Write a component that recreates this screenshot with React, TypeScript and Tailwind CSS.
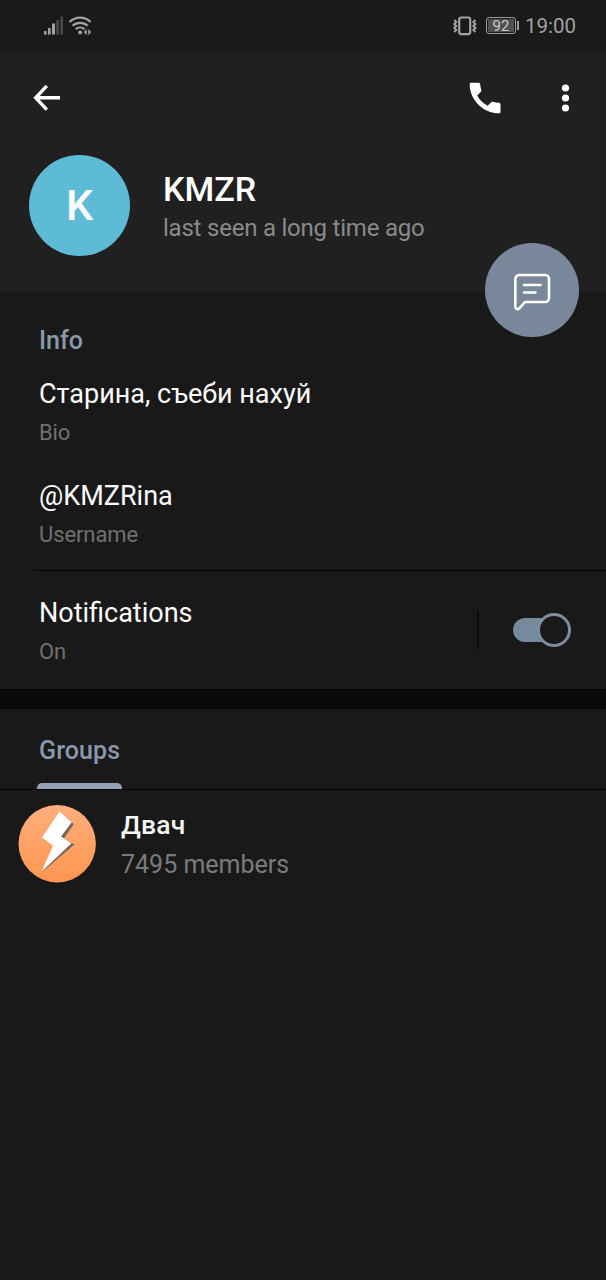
import type { ReactNode } from "react";

const StatusBar = () => (
  <div className="flex h-[51px] items-center justify-between bg-[#1a1a1a] pl-[43px] pr-[30px] text-[#a2a2a2]">
    <div className="flex items-center gap-[5px]">
      {/* Signal strength */}
      <svg width="21" height="20" viewBox="0 0 21 20" fill="currentColor">
        <rect x="1" y="15" width="2.6" height="3.6" />
        <rect x="5" y="12" width="2.6" height="6.6" />
        <rect x="9" y="7.5" width="3" height="11" />
        <rect x="13.3" y="4" width="2.6" height="14.6" fill="#4b4b4b" />
        <rect x="17.4" y=".5" width="2.6" height="18" fill="#4b4b4b" />
      </svg>
      {/* Wi-Fi with traffic arrows */}
      <svg width="24" height="20" viewBox="0 0 24 20" fill="none" stroke="currentColor" strokeWidth="2.2">
        <path d="M.6 6C6.600 .2 15.600 .2 21.600 6" />
        <path d="M3.600 9.800C7.600 5.900 14.600 5.900 18.600 9.800" />
        <path d="M6.600 13.200C9.200 10.900 13 10.900 15.600 13.200" />
        <circle cx="11.100" cy="16.600" r="2" fill="currentColor" stroke="none" />
        <path d="M17.700 13v6.200l-2.900-3.100zM19.300 13v6.200l2.900-3.100z" fill="currentColor" stroke="none" />
      </svg>
    </div>
    <div className="flex items-center">
      {/* Vibrate mode */}
      <svg width="25" height="20" viewBox="0 0 25 20" fill="none" stroke="currentColor">
        <rect x="7.2" y="1.5" width="11" height="16.6" rx="2" strokeWidth="2.2" />
        <path d="M2.300 4l2 2-2 2 2 2-2 2 2 2-2 2M23.400 4l-2 2 2 2-2 2 2 2-2 2 2 2" strokeWidth="2" />
      </svg>
      <div className="ml-[9px] flex h-[17px] w-[30px] items-center justify-center rounded-[3px] border border-[#999] p-px">
        <span className="flex h-full w-full items-center justify-center bg-[#505050] pt-px text-[15px] leading-none text-[#c8c8c8]">92</span>
      </div>
      <div className="ml-px h-[9px] w-[2px] bg-[#9a9a9a]" />
      <span className="ml-[6px] text-[20.5px] leading-[26px]">19:00</span>
    </div>
  </div>
);

const Toolbar = () => (
  <div className="flex h-[94px] items-center pl-[33px] pr-[35px] text-white">
    <svg width="28" height="28" viewBox="0 0 28 28" fill="none" stroke="currentColor" strokeWidth="3.4">
      <path d="M13.8 1.9L2.7 13.8l11.1 11.9M2.8 13.8H27" />
    </svg>
    <svg className="ml-auto" width="32" height="32" viewBox="0 0 32 32" fill="currentColor">
      <path d="M2.2 .7H9.6C10.5 .7 11.1 1.3 11.2 2.2c.1 2.1.5 4.1 1.1 5.9.2.6.1 1.2-.4 1.7L8.2 13.5c2.5 4.5 6 8 10.4 10.3l3.6-3.6c.5-.5 1.1-.6 1.7-.4 1.9.6 3.9.9 6 1 .9 0 1.6.7 1.6 1.6v7.3c0 .9-.7 1.6-1.6 1.6C14.2 31.3.7 17.8.7 2.2c0-.9.6-1.5 1.5-1.5z" />
    </svg>
    <svg className="ml-[59px]" width="11" height="28" viewBox="0 0 11 28" fill="currentColor">
      <circle cx="5.5" cy="4" r="3.6" />
      <circle cx="5.5" cy="14" r="3.6" />
      <circle cx="5.5" cy="24" r="3.6" />
    </svg>
  </div>
);

const Field = ({ value, label }: { value: ReactNode; label: string }) => (
  <div className="h-[102px]">
    <p className="text-[27px] leading-[40px] text-[#fdfdfd]">{value}</p>
    <p className="mt-[3px] text-[22px] leading-8 tracking-[-0.1px] text-[#707070]">{label}</p>
  </div>
);

const MessageButton = () => (
  <button
    aria-label="Send message"
    className="absolute right-[27px] -bottom-[44px] flex h-[94px] w-[94px] items-center justify-center rounded-full bg-[#79879a]"
  >
    <svg
      className="mt-[3px]"
      width="38"
      height="38"
      viewBox="0 0 38 38"
      fill="none"
      stroke="white"
      strokeWidth="2.6"
      strokeLinecap="round"
      strokeLinejoin="round"
    >
      <path d="M6 2h26a4 4 0 0 1 4 4v19a4 4 0 0 1-4 4H12l-5.500 6.200c-1.500 1.700-4.200.8-4.200-1.500V6a4 4 0 0 1 3.700-4z" />
      <path d="M11 12h16.500M11 19.500h11.500" />
    </svg>
  </button>
);

const Switch = () => (
  <div role="switch" aria-checked="true" className="flex items-center">
    <div className="h-6 w-[40px] rounded-l-full bg-[#768a9e]" />
    <div className="-ml-[16px] h-[34px] w-[34px] rounded-full border-3 border-[#7f8c9c] bg-[#191919]" />
  </div>
);

const GroupRow = () => (
  <div className="flex pl-[18px] pt-[15px]">
    <svg width="78" height="78" viewBox="0 0 78 78">
      <defs>
        <linearGradient id="orange" x1="0" y1="0" x2="0" y2="1">
          <stop offset="0" stopColor="#ffae7d" />
          <stop offset="1" stopColor="#ff9650" />
        </linearGradient>
      </defs>
      <circle cx="39.2" cy="38.7" r="38.7" fill="url(#orange)" />
      <path d="M44 9L55.800 19 46 33.500 56.500 39.500 24 67 37 42 30 31z" fill="#7c6658" />
      <path d="M41.500 6.500L53.700 17.300 43 31.500 53.500 38.300 23.500 66.700 35 40.500 24 32.500z" fill="#fff" />
    </svg>
    <div className="ml-[25px]">
      <p className="text-[26.5px] font-medium leading-[40px] tracking-[0.2px] text-[#f5f5f5]">Двач</p>
      <p className="mt-[2px] text-[25px] leading-[35px] text-[#7b7b7b]">7495 members</p>
    </div>
  </div>
);

const App = () => (
  <div className="min-h-[1280px] w-[606px] overflow-hidden bg-[#191919] font-['Roboto',sans-serif]">
    <StatusBar />

    <header className="relative h-[242px] bg-[#202020]">
      <Toolbar />
      <div className="flex pl-[29px] pt-[10px]">
        <div className="flex h-[101px] w-[101px] items-center justify-center rounded-full bg-[#5ebbd5] text-[43px] font-medium text-white">
          K
        </div>
        <div className="ml-[33px] pt-[14px]">
          <h1 className="text-[34px] font-medium leading-[40px] text-white">KMZR</h1>
          <p className="mt-[4px] text-[24px] leading-[30px] tracking-[-0.22px] text-[#8a8a8a]">last seen a long time ago</p>
        </div>
      </div>
      <MessageButton />
    </header>

    <section className="h-[277px] pl-[39px] pt-[31px]">
      <h2 className="text-[25px] font-medium leading-[34px] text-[#8a98ac]">Info</h2>
      <div className="pt-[16px]">
        <Field value="Старина, съеби нахуй" label="Bio" />
        <Field value="@KMZRina" label="Username" />
      </div>
    </section>

    <div className="ml-[34px] h-px bg-[#050505]" />

    <section className="flex h-[118px] pl-[39px] pr-[35px]">
      <div className="grow pt-[22px]">
        <Field value="Notifications" label="On" />
      </div>
      <div className="flex h-[118px] items-center gap-[34px]">
        <div className="h-[38px] w-[2px] bg-[#0a0a0a]" />
        <Switch />
      </div>
    </section>

    <div className="h-5 bg-[#0a0a0a]" />

    <nav className="flex h-[81px] flex-col border-b border-[#060606] pl-[37px]">
      <div className="flex h-full w-[85px] flex-col justify-between pt-[25px]">
        <span className="pl-[2px] text-[25px] font-medium leading-[34px] tracking-[0.1px] text-[#8a98ac]">Groups</span>
        <div className="h-[6px] rounded-t-[5px] bg-[#94a3b9]" />
      </div>
    </nav>

    <GroupRow />
  </div>
);

export default App;
